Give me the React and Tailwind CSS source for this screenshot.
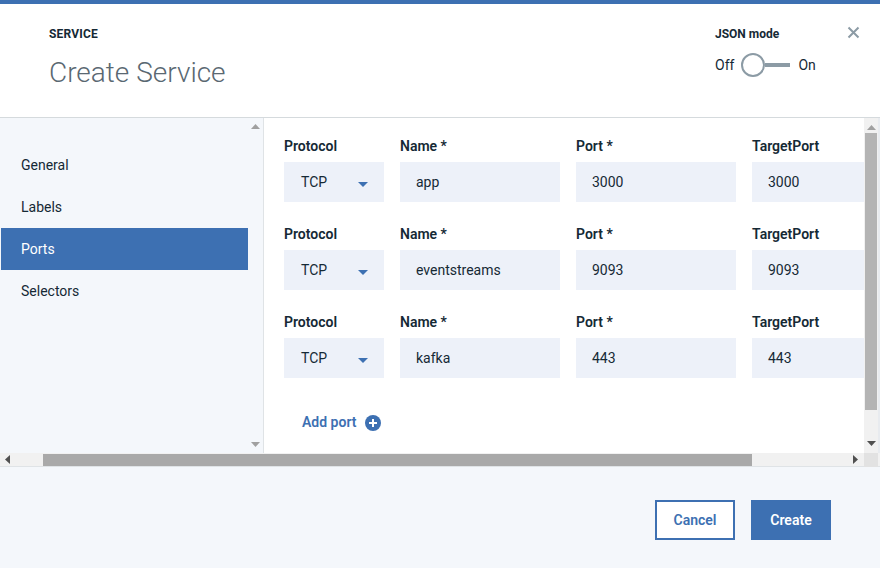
import React from "react";

const rows = [
  { name: "app", port: "3000", target: "3000" },
  { name: "eventstreams", port: "9093", target: "9093" },
  { name: "kafka", port: "443", target: "443" },
];

function Label({ children }) {
  return (
    <div className="h-4 text-[14px] leading-4 font-semibold text-[#152935] mb-2 whitespace-nowrap">
      {children}
    </div>
  );
}

function Field({ value, width }) {
  return (
    <div className={`${width} h-10 bg-[#edf1f9] flex items-center px-4 text-[14px] text-[#152935] shrink-0`}>
      {value}
    </div>
  );
}

export default function App() {
  return (
    <div
      className="w-[880px] h-[568px] bg-white flex flex-col overflow-hidden border-t-4 border-[#3d70b2]"
      style={{ fontFamily: "Roboto, 'Noto Sans', sans-serif" }}
    >
      {/* Header */}
      <div className="h-[114px] shrink-0 flex border-b border-[#d5dadd] bg-white">
        <div className="flex-1 pl-[49px] pt-[20px]">
          <div className="text-[12px] font-bold text-[#152935] leading-5 tracking-[0.2px]">SERVICE</div>
          <div className="text-[28px] font-light text-[#5a6872] leading-9 mt-[11px]">Create Service</div>
        </div>
        <div className="w-[165px] pl-0 pt-[20px] flex">
          <div className="flex flex-col">
            <div className="text-[12px] font-bold text-[#152935] leading-5">JSON mode</div>
            <div className="flex items-center mt-[9px] h-6 text-[14px] text-[#152935]">
              <span>Off</span>
              <div className="ml-[7px] w-6 h-6 rounded-full border-2 border-[#8c9ba5] bg-white"></div>
              <div className="w-[25px] h-[4px] bg-[#8c9ba5]"></div>
              <span className="ml-[8px]">On</span>
            </div>
          </div>
          <div className="ml-auto mr-[20px] mt-[2px]">
            <svg width="13" height="13" viewBox="0 0 13 13">
              <path d="M1.5 1.5 L11.5 11.5 M11.5 1.5 L1.5 11.5" stroke="#8c9ba5" strokeWidth="2" />
            </svg>
          </div>
        </div>
      </div>

      {/* Body */}
      <div className="h-[335px] shrink-0 flex">
        {/* Sidebar */}
        <div className="w-[264px] shrink-0 bg-[#f4f7fb] border-r border-[#dfe3e6] flex">
          <div className="w-[248px] pt-[26px] pl-[1px]">
            {["General", "Labels", "Ports", "Selectors"].map((t) => (
              <div
                key={t}
                className={`h-[42px] flex items-center pl-[20px] text-[14px] ${
                  t === "Ports" ? "bg-[#3d70b2] text-white" : "text-[#152935]"
                }`}
              >
                {t}
              </div>
            ))}
          </div>
          <div className="flex-1 flex flex-col items-center justify-between py-[6px]">
            <svg width="9" height="5" viewBox="0 0 9 5"><path d="M0 5 L4.5 0 L9 5 Z" fill="#a0a0a0" /></svg>
            <svg width="9" height="5" viewBox="0 0 9 5"><path d="M0 0 L4.5 5 L9 0 Z" fill="#a0a0a0" /></svg>
          </div>
        </div>

        {/* Content */}
        <div className="flex-1 flex min-w-0 bg-white">
          <div className="flex-1 overflow-hidden pl-[20px] pt-[20px] min-w-0">
            {rows.map((r, i) => (
              <div key={i} className="flex gap-4 mb-6">
                <div className="shrink-0">
                  <Label>Protocol</Label>
                  <div className="w-[100px] h-10 bg-[#edf1f9] flex items-center pl-[17px] pr-[16px] text-[14px] text-[#152935]">
                    <span>TCP</span>
                    <svg className="ml-auto mt-[4px]" width="10" height="5" viewBox="0 0 10 5">
                      <path d="M0 0 L10 0 L5 5 Z" fill="#3d70b2" />
                    </svg>
                  </div>
                </div>
                <div className="shrink-0">
                  <Label>Name *</Label>
                  <Field value={r.name} width="w-[160px]" />
                </div>
                <div className="shrink-0">
                  <Label>Port *</Label>
                  <Field value={r.port} width="w-[160px]" />
                </div>
                <div className="shrink-0">
                  <Label>TargetPort</Label>
                  <Field value={r.target} width="w-[160px]" />
                </div>
              </div>
            ))}
            <div className="flex items-center pl-[18px] mt-[34px] text-[14px] font-semibold text-[#3d70b2]">
              <span>Add port</span>
              <svg className="ml-[9px]" width="16" height="16" viewBox="0 0 16 16">
                <circle cx="8" cy="8" r="8" fill="#3d70b2" />
                <path d="M8 4 V12 M4 8 H12" stroke="white" strokeWidth="2" />
              </svg>
            </div>
          </div>
          {/* Vertical scrollbar */}
          <div className="w-[14px] shrink-0 bg-[#f1f1f1] flex flex-col items-center">
            <svg className="mt-[7px]" width="9" height="5" viewBox="0 0 9 5"><path d="M0 5 L4.5 0 L9 5 Z" fill="#a0a0a0" /></svg>
            <div className="w-[12px] h-[277px] bg-[#b4b4b4] mt-[3px]"></div>
            <svg className="mt-auto mb-[7px]" width="9" height="5" viewBox="0 0 9 5"><path d="M0 0 L4.5 5 L9 0 Z" fill="#505050" /></svg>
          </div>
          <div className="w-[2px] shrink-0 bg-[#e8ebef]"></div>
        </div>
      </div>

      {/* Horizontal scrollbar */}
      <div className="h-[14px] shrink-0 flex items-center bg-[#f1f1f1] border-b border-[#dfe3e6]">
        <svg className="ml-[5px]" width="5" height="9" viewBox="0 0 5 9"><path d="M5 0 L0 4.5 L5 9 Z" fill="#505050" /></svg>
        <div className="ml-[33px] w-[709px] h-[12px] bg-[#a9a9a9]"></div>
        <svg className="ml-auto mr-[6px]" width="5" height="9" viewBox="0 0 5 9"><path d="M0 0 L5 4.5 L0 9 Z" fill="#505050" /></svg>
        <div className="w-[14px] h-[14px] bg-[#e2e2e2] mr-[2px]"></div>
      </div>

      {/* Footer */}
      <div className="flex-1 bg-[#f4f7fb] flex justify-end items-start pt-[33px] pr-[49px] gap-4">
        <button className="w-[80px] h-10 border-2 border-[#3d70b2] text-[#3d70b2] text-[14px] font-semibold bg-white">
          Cancel
        </button>
        <button className="w-[80px] h-10 bg-[#3d70b2] text-white text-[14px] font-semibold">
          Create
        </button>
      </div>
    </div>
  );
}
